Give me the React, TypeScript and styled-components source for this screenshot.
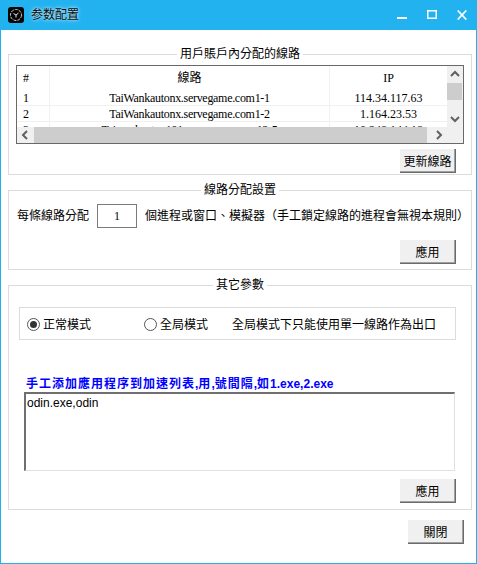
import styled, { createGlobalStyle } from "styled-components";

const GlobalStyle = createGlobalStyle`
  html, body {
    margin: 0;
    padding: 0;
    background: #fff;
  }
  * {
    box-sizing: border-box;
  }
`;

const Window = styled.div`
  width: 477px;
  height: 564px;
  display: flex;
  flex-direction: column;
  background: #fff;
  border: 1px solid #23b1ee;
  border-top: 0;
  font-family: "Liberation Sans", "Noto Sans CJK TC", sans-serif;
  font-size: 12px;
  line-height: 16px;
  color: #000;
`;

const TitleBar = styled.div`
  height: 30px;
  flex: none;
  margin: 0 -1px;
  padding: 0 10px 0 8px;
  display: flex;
  align-items: center;
  background: #23b2f0;
`;

const Title = styled.span`
  margin-left: 7px;
  color: #0a0a0a;
  text-shadow: 0 0 4px rgba(255, 255, 255, 0.8), 0 0 2px rgba(255, 255, 255, 0.5);
`;

const Controls = styled.div`
  margin-left: auto;
  display: flex;
  gap: 20px;
`;

const Body = styled.div`
  flex: 1;
  padding: 24px 4px 0 7px;
  display: flex;
  flex-direction: column;
  gap: 15px;
`;

const Group = styled.section<{ $height: number; $padding: string }>`
  position: relative;
  height: ${(p) => p.$height}px;
  padding: ${(p) => p.$padding};
  display: flex;
  flex-direction: column;
  border: 1px solid #dcdcdc;
`;

const Legend = styled.h2`
  position: absolute;
  top: -9px;
  left: 50%;
  transform: translateX(-50%);
  margin: 0;
  padding: 0 3px;
  background: #fff;
  font-size: 12px;
  font-weight: 400;
  line-height: 16px;
  white-space: nowrap;
`;

const ListFrame = styled.div`
  height: 79px;
  flex: none;
  display: grid;
  grid-template-columns: 430px 16px;
  grid-template-rows: 61px 16px;
  border: 1px solid #696969;
  background: #f0f0f0;
`;

const ListView = styled.div`
  overflow: hidden;
  background: #fff;
  font-family: "Liberation Serif", "Noto Sans CJK TC", serif;
`;

const Row = styled.div<{ $header?: boolean }>`
  display: grid;
  grid-template-columns: 33px 280px 117px;
  height: ${(p) => (p.$header ? 24 : 16)}px;
  border-bottom: ${(p) => (p.$header ? "0" : "1px solid #f0f0f0")};
`;

const Cell = styled.div<{ $left?: boolean; $header?: boolean }>`
  padding-left: ${(p) => (p.$left ? 6 : 0)}px;
  text-align: ${(p) => (p.$left ? "left" : "center")};
  line-height: ${(p) => (p.$header ? 24 : 16)}px;
  white-space: nowrap;
  border-right: 1px solid #f0f0f0;
  &:last-child {
    border-right: 0;
  }
`;

const NameCell = styled(Cell)`
  letter-spacing: -0.3px;
`;

const VTrack = styled.div`
  display: flex;
  flex-direction: column;
  justify-content: flex-start;
`;

const HTrack = styled.div`
  display: flex;
`;

const ArrowBox = styled.div`
  width: 16px;
  height: 17px;
  flex: none;
  display: flex;
  align-items: center;
  justify-content: center;
`;

const ArrowBoxH = styled(ArrowBox)`
  width: 17px;
  height: 16px;
`;

const VThumb = styled.div`
  width: 15px;
  height: 17px;
  margin-bottom: 10px;
  background: #cdcdcd;
`;

const HThumb = styled.div`
  width: 393px;
  height: 16px;
  margin-right: 3px;
  background: #cdcdcd;
`;

const Corner = styled.div`
  background: #f0f0f0;
`;

const Actions = styled.div<{ $top: number; $right: number }>`
  margin-top: ${(p) => p.$top}px;
  padding-right: ${(p) => p.$right}px;
  display: flex;
  justify-content: flex-end;
`;

const Button = styled.button`
  width: 56px;
  height: 24px;
  padding: 0;
  background: #f0f0f0;
  border: 0;
  border-right: 1px solid #6b6b6b;
  border-bottom: 1px solid #6b6b6b;
  box-shadow: inset -1px -1px 0 #a0a0a0;
  font-family: inherit;
  font-size: 12px;
  color: #000;
`;

const AssignRow = styled.div`
  margin-top: 13px;
  margin-left: 1px;
  height: 24px;
  display: flex;
  align-items: center;
  white-space: nowrap;
`;

const CountInput = styled.div`
  width: 40px;
  height: 24px;
  margin: 0 8px;
  flex: none;
  border: 1px solid #7a7a7a;
  font-family: "Liberation Serif", serif;
  text-align: center;
  line-height: 22px;
`;

const ModeBox = styled.div`
  width: 437px;
  height: 33px;
  margin: 21px 0 0 10px;
  padding: 2px 0 0 7px;
  display: flex;
  align-items: center;
  border: 1px solid #dcdcdc;
`;

const Radio = styled.span<{ $on?: boolean }>`
  width: 13px;
  height: 13px;
  flex: none;
  display: flex;
  align-items: center;
  justify-content: center;
  border: 1px solid #555;
  border-radius: 50%;
  background: #fff;
  &::after {
    content: "";
    width: 7px;
    height: 7px;
    border-radius: 50%;
    background: ${(p) => (p.$on ? "#333" : "transparent")};
  }
`;

const RadioLabel = styled.span<{ $width: number }>`
  width: ${(p) => p.$width}px;
  flex: none;
  margin-left: 3px;
  white-space: nowrap;
`;

const Hint = styled.span`
  white-space: nowrap;
`;

const BlueLabel = styled.div`
  margin: 36px 0 0 17px;
  color: #0000ff;
  font-weight: 700;
  line-height: 16px;
  white-space: nowrap;
`;

const Wide = styled.span`
  letter-spacing: 1px;
`;

const AppList = styled.div`
  width: 431px;
  height: 79px;
  margin-left: 15px;
  padding: 2px 1px;
  border-style: solid;
  border-width: 2px 1px 1px 2px;
  border-color: #6f6f6f #e0e0e0 #e0e0e0 #6f6f6f;
  line-height: 14px;
`;

const Footer = styled.div`
  margin-top: -5px;
  padding-right: 8px;
  display: flex;
  justify-content: flex-end;
`;

function Chevron({ dir }: { dir: "up" | "down" | "left" | "right" }) {
  const points = {
    up: "1,6 5,2 9,6",
    down: "1,3 5,7 9,3",
    left: "6,1 2,5 6,9",
    right: "3,1 7,5 3,9",
  }[dir];
  return (
    <svg width="10" height="10" viewBox="0 0 10 10">
      <polyline points={points} fill="none" stroke="#606060" strokeWidth="2" />
    </svg>
  );
}

function AppIcon() {
  return (
    <svg width="16" height="16" viewBox="0 0 16 16">
      <rect width="16" height="16" rx="3" fill="#050505" />
      <circle cx="8" cy="8" r="5.5" fill="none" stroke="#c8c8c8" strokeWidth="1" strokeDasharray="3 1" />
      <path d="M5.5 6.5 L8 8 L10.5 6 M8 8 L8 10.5" fill="none" stroke="#e0e0e0" strokeWidth="1" />
    </svg>
  );
}

function WindowControls() {
  return (
    <Controls>
      <svg width="10" height="10" viewBox="0 0 10 10">
        <rect x="0" y="7" width="10" height="2" fill="#fff" />
      </svg>
      <svg width="10" height="10" viewBox="0 0 10 10">
        <rect x="0.75" y="0.75" width="8.5" height="7.5" fill="none" stroke="#fff" strokeWidth="1.5" />
      </svg>
      <svg width="10" height="10" viewBox="0 0 10 10">
        <path d="M0.7 0.5 L9.3 9.5 M9.3 0.5 L0.7 9.5" stroke="#fff" strokeWidth="1.7" />
      </svg>
    </Controls>
  );
}

const lines = [
  ["1", "TaiWankautonx.servegame.com1-1", "114.34.117.63"],
  ["2", "TaiWankautonx.servegame.com1-2", "1.164.23.53"],
  ["3", "Taiwankauton191.servegame.com12-5", "10.248.144.18"],
];

function App() {
  return (
    <Window>
      <GlobalStyle />
      <TitleBar>
        <AppIcon />
        <Title>参数配置</Title>
        <WindowControls />
      </TitleBar>
      <Body>
        <Group $height={121} $padding="10px 7px 0">
          <Legend>用戶賬戶內分配的線路</Legend>
          <ListFrame>
            <ListView>
              <Row $header>
                <Cell $left $header>#</Cell>
                <Cell $header>線路</Cell>
                <Cell $header>IP</Cell>
              </Row>
              {lines.map(([no, name, ip]) => (
                <Row key={no}>
                  <Cell $left>{no}</Cell>
                  <NameCell>{name}</NameCell>
                  <Cell>{ip}</Cell>
                </Row>
              ))}
            </ListView>
            <VTrack>
              <ArrowBox><Chevron dir="up" /></ArrowBox>
              <VThumb />
              <ArrowBox><Chevron dir="down" /></ArrowBox>
            </VTrack>
            <HTrack>
              <ArrowBoxH><Chevron dir="left" /></ArrowBoxH>
              <HThumb />
              <ArrowBoxH><Chevron dir="right" /></ArrowBoxH>
            </HTrack>
            <Corner />
          </ListFrame>
          <Actions $top={5} $right={8}>
            <Button>更新線路</Button>
          </Actions>
        </Group>

        <Group $height={80} $padding="0 7px">
          <Legend>線路分配設置</Legend>
          <AssignRow>
            每條線路分配
            <CountInput>1</CountInput>
            個進程或窗口、模擬器（手工鎖定線路的進程會無視本規則）
          </AssignRow>
          <Actions $top={12} $right={8}>
            <Button>應用</Button>
          </Actions>
        </Group>

        <Group $height={225} $padding="0">
          <Legend>其它參數</Legend>
          <ModeBox>
            <Radio $on />
            <RadioLabel $width={101}>正常模式</RadioLabel>
            <Radio />
            <RadioLabel $width={72}>全局模式</RadioLabel>
            <Hint>全局模式下只能使用單一線路作為出口</Hint>
          </ModeBox>
          <BlueLabel>
            <Wide>手工添加應用程序到加速列表</Wide>,<Wide>用</Wide>,<Wide>號間隔</Wide>,<Wide>如</Wide>1.exe,2.exe
          </BlueLabel>
          <AppList>odin.exe,odin</AppList>
          <Actions $top={8} $right={15}>
            <Button>應用</Button>
          </Actions>
        </Group>

        <Footer>
          <Button>關閉</Button>
        </Footer>
      </Body>
    </Window>
  );
}

export default App;
